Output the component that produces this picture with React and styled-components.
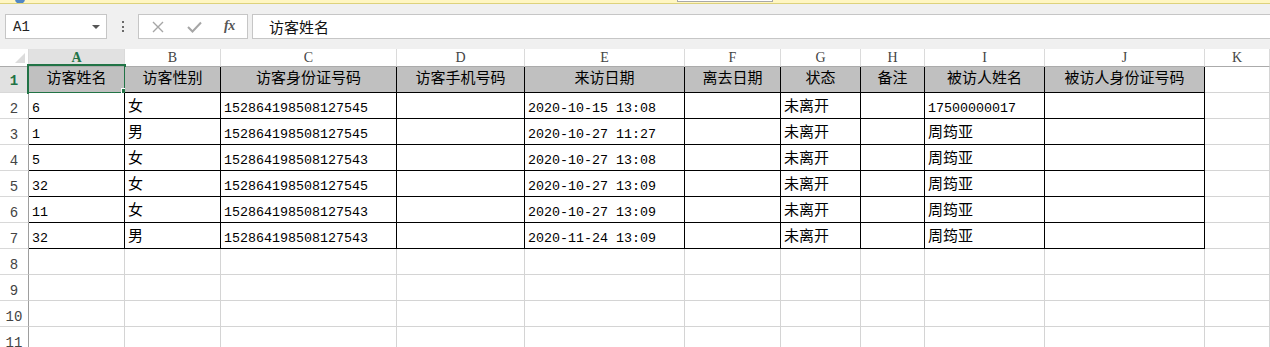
import React from 'react';
import styled, { createGlobalStyle } from 'styled-components';

const GlobalStyle = createGlobalStyle`
  html, body {
    margin: 0;
    padding: 0;
    background: #fff;
    overflow: hidden;
  }
`;

const Frame = styled.div`
  width: 1270px;
  height: 347px;
  overflow: hidden;
  font-family: "Liberation Mono", "Noto Sans CJK SC", monospace;
`;

const NoticeBar = styled.div`
  height: 3px;
  background: #fff6c2;
  border-bottom: 1px solid #ddd27c;
  display: flex;
  align-items: flex-end;
  overflow: hidden;
`;

const NoticeIcon = styled.div`
  width: 10px;
  height: 10px;
  margin-left: 15px;
  margin-bottom: -1px;
  border-radius: 50%;
  background: #4f86c6;
  flex: none;
`;

const NoticeBox = styled.div`
  width: 94px;
  height: 1px;
  margin-left: 652px;
  align-self: flex-start;
  background: #fff;
  border: 1px solid #a8a8a8;
  border-top: none;
`;

const FormulaBar = styled.div`
  display: flex;
  background: #f0f0f0;
  padding: 10px 0 10px 5px;
  height: 25px;
`;

const NameBox = styled.div`
  box-sizing: border-box;
  width: 102px;
  height: 25px;
  background: #fff;
  border: 1px solid #c6c6c6;
  display: flex;
  align-items: center;
  justify-content: space-between;
  padding: 0 6px 0 7px;
  font-size: 14px;
  color: #222;
`;

const DropArrow = styled.span`
  width: 0;
  height: 0;
  border-left: 4px solid transparent;
  border-right: 4px solid transparent;
  border-top: 4px solid #555;
`;

const Dots = styled.div`
  width: 31px;
  display: flex;
  flex-direction: column;
  align-items: center;
  justify-content: center;
  gap: 2.5px;

  span {
    width: 2px;
    height: 2px;
    background: #6a6a6a;
  }
`;

const ButtonBox = styled.div`
  box-sizing: border-box;
  width: 110px;
  height: 25px;
  background: #fff;
  border: 1px solid #c6c6c6;
  display: flex;
  align-items: center;
  padding-left: 13px;
`;

const IconSlot = styled.span`
  width: ${p => p.$w}px;
  display: flex;
  align-items: center;
`;

const Fx = styled.span`
  font-family: "Liberation Serif", serif;
  font-style: italic;
  font-weight: bold;
  font-size: 14px;
  color: #555;
  letter-spacing: -0.5px;
  margin-top: -2px;
`;

const FormulaInput = styled.div`
  flex: 1;
  height: 25px;
  box-sizing: border-box;
  margin-left: 4px;
  background: #fff;
  border: 1px solid #c6c6c6;
  border-right: none;
  display: flex;
  align-items: center;
  padding-left: 16px;
  font-family: "Noto Sans CJK SC", sans-serif;
  font-size: 15px;
  color: #111;
`;

const cols = [96, 96, 176, 128, 160, 96, 80, 64, 120, 160];
const letters = ['A', 'B', 'C', 'D', 'E', 'F', 'G', 'H', 'I', 'J', 'K'];

const Sheet = styled.div`
  display: grid;
  grid-template-columns: 29px ${cols.map(c => c + 'px').join(' ')} 1fr;
  grid-template-rows: 18px;
  grid-auto-rows: 26px;
`;

const Corner = styled.div`
  box-sizing: border-box;
  border-right: 1px solid #dadada;
  border-bottom: 1px solid #ababab;
  background: #fff;
  position: relative;

  &::after {
    content: '';
    position: absolute;
    right: 3px;
    bottom: 3px;
    width: 0;
    height: 0;
    border-left: 10px solid transparent;
    border-bottom: 10px solid #dcdcdc;
  }
`;

const ColHead = styled.div`
  box-sizing: border-box;
  display: flex;
  align-items: center;
  justify-content: center;
  border-right: 1px solid #dadada;
  border-bottom: 1px solid #ababab;
  background: ${p => (p.$active ? '#e1e1e1' : '#fff')};
  color: ${p => (p.$active ? '#217346' : '#444')};
  font-weight: ${p => (p.$active ? 'bold' : 'normal')};
  font-family: "Liberation Serif", serif;
  font-size: 14px;
`;

const RowHead = styled.div`
  box-sizing: border-box;
  display: flex;
  align-items: flex-end;
  justify-content: center;
  padding-bottom: ${p => (p.$active ? '3px' : '1px')};
  border-right: 1px solid #9e9e9e;
  border-bottom: 1px solid #d8d8d8;
  background: ${p => (p.$active ? '#e1e1e1' : '#fff')};
  color: ${p => (p.$active ? '#217346' : '#444')};
  font-weight: ${p => (p.$active ? 'bold' : 'normal')};
  font-size: 14px;
  line-height: 16px;
`;

const Cell = styled.div`
  box-sizing: border-box;
  position: relative;
  display: flex;
  align-items: ${p => (p.$head ? 'center' : 'flex-end')};
  justify-content: ${p => (p.$head ? 'center' : 'flex-start')};
  padding: 0 3px ${p => (p.$head ? 0 : p.$zh ? 1 : 0)}px;
  border-right: 1px solid ${p => (p.$table ? '#000' : '#d4d4d4')};
  border-bottom: 1px solid ${p => (p.$table ? '#000' : '#d4d4d4')};
  background: ${p => (p.$head ? '#c0c0c0' : '#fff')};
  font-size: ${p => (p.$zh ? '15px' : '13.33px')};
  line-height: 18px;
  white-space: nowrap;
  color: #000;
`;

const Selection = styled.div`
  position: absolute;
  left: -2px;
  top: -3px;
  width: 99px;
  height: 30px;
  box-sizing: border-box;
  border: 2px solid #217346;
  pointer-events: none;
`;

const Handle = styled.span`
  position: absolute;
  left: 93px;
  top: 23px;
  width: 5px;
  height: 5px;
  background: #217346;
  box-shadow: 0 0 0 1px #fff;
`;

const header = ['访客姓名', '访客性别', '访客身份证号码', '访客手机号码', '来访日期', '离去日期', '状态', '备注', '被访人姓名', '被访人身份证号码'];

const rows = [
  ['6', '女', '152864198508127545', '', '2020-10-15 13:08', '', '未离开', '', '17500000017', ''],
  ['1', '男', '152864198508127545', '', '2020-10-27 11:27', '', '未离开', '', '周筠亚', ''],
  ['5', '女', '152864198508127543', '', '2020-10-27 13:08', '', '未离开', '', '周筠亚', ''],
  ['32', '女', '152864198508127545', '', '2020-10-27 13:09', '', '未离开', '', '周筠亚', ''],
  ['11', '女', '152864198508127543', '', '2020-10-27 13:09', '', '未离开', '', '周筠亚', ''],
  ['32', '男', '152864198508127543', '', '2020-11-24 13:09', '', '未离开', '', '周筠亚', ''],
];

const isZh = s => /[\u4e00-\u9fff]/.test(s);

function XIcon() {
  return (
    <svg width="12" height="12" viewBox="0 0 12 12">
      <path d="M1 1 L11 11 M11 1 L1 11" stroke="#a6a6a6" strokeWidth="1.4" fill="none" />
    </svg>
  );
}

function CheckIcon() {
  return (
    <svg width="15" height="12" viewBox="0 0 15 12">
      <path d="M1 6 L5.5 10.5 L14 1.5" stroke="#a6a6a6" strokeWidth="2" fill="none" />
    </svg>
  );
}

export default function App() {
  return (
    <Frame>
      <GlobalStyle />
      <NoticeBar>
        <NoticeIcon />
        <NoticeBox />
      </NoticeBar>
      <FormulaBar>
        <NameBox>
          <span>A1</span>
          <DropArrow />
        </NameBox>
        <Dots>
          <span />
          <span />
          <span />
        </Dots>
        <ButtonBox>
          <IconSlot $w={35}><XIcon /></IconSlot>
          <IconSlot $w={37}><CheckIcon /></IconSlot>
          <IconSlot $w={20}><Fx>fx</Fx></IconSlot>
        </ButtonBox>
        <FormulaInput>访客姓名</FormulaInput>
      </FormulaBar>
      <Sheet>
        <Corner />
        {letters.map((l, i) => (
          <ColHead key={l} $active={i === 0}>{l}</ColHead>
        ))}

        <RowHead $active>1</RowHead>
        {header.map((h, i) => (
          <Cell key={h} $table $head $zh>
            {h}
            {i === 0 && (
              <Selection>
                <Handle />
              </Selection>
            )}
          </Cell>
        ))}
        <Cell />

        {rows.map((r, ri) => (
          <React.Fragment key={ri}>
            <RowHead>{ri + 2}</RowHead>
            {r.map((v, ci) => (
              <Cell key={ci} $table $zh={isZh(v)}>{v}</Cell>
            ))}
            <Cell />
          </React.Fragment>
        ))}

        {[8, 9, 10, 11].map(n => (
          <React.Fragment key={n}>
            <RowHead>{n}</RowHead>
            {letters.map(l => (
              <Cell key={l} />
            ))}
          </React.Fragment>
        ))}
      </Sheet>
    </Frame>
  );
}
